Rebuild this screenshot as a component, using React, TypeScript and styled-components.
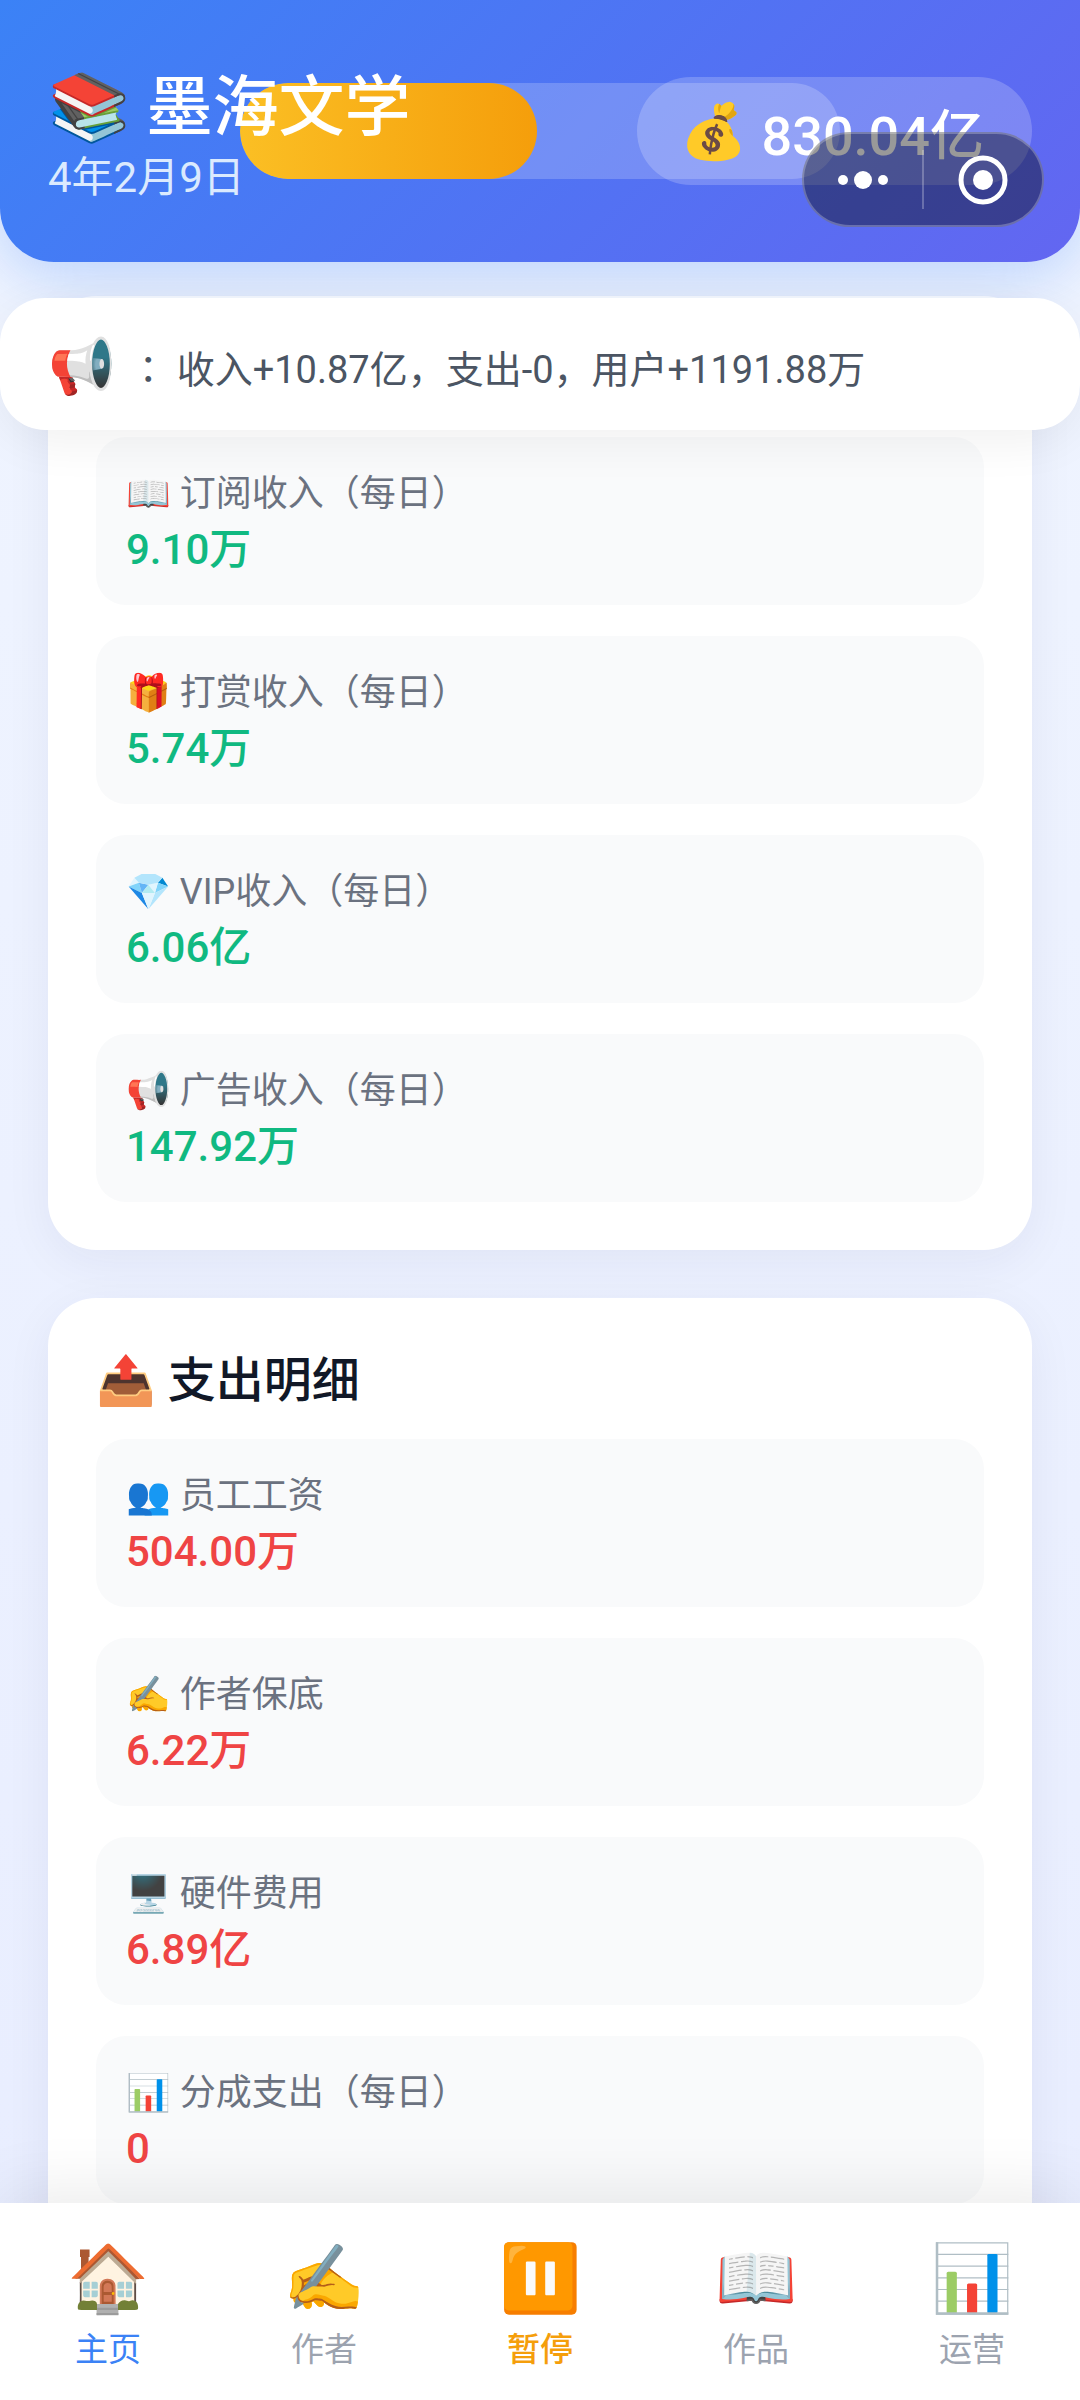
import { createGlobalStyle, styled } from 'styled-components';

const GlobalStyle = createGlobalStyle`
  * {
    box-sizing: border-box;
  }

  body {
    margin: 0;
    font-family: Roboto, 'Noto Sans CJK SC', 'Noto Color Emoji', sans-serif;
    color: #111827;
  }

  button {
    padding: 0;
    border: 0;
    background: none;
    font: inherit;
    cursor: pointer;
  }
`;

const Page = styled.div`
  position: relative;
  display: flex;
  flex-direction: column;
  height: 100vh;
  overflow: hidden;
  background: linear-gradient(180deg, #f0f5ff 0%, #e8edff 100%);
`;

const Header = styled.header`
  position: relative;
  z-index: 2;
  display: flex;
  align-items: center;
  justify-content: space-between;
  padding: 58px 48px;
  border-radius: 0 0 54px 54px;
  background: linear-gradient(135deg, #3b82f6 0%, #6366f1 100%);
  box-shadow: 0 12px 60px rgba(59, 130, 246, 0.3);
  color: #fff;
`;

const Company = styled.div`
  position: relative;
  padding-top: 6px;
`;

const CompanyName = styled.h1`
  margin: 0;
  font-size: 66px;
  font-weight: 500;
  line-height: 88px;
`;

const GameDate = styled.div`
  color: #dbeafe;
  font-size: 42px;
  line-height: 52px;
`;

// 当日进度，铺在标题和资金下面
const Track = styled.div`
  position: absolute;
  top: 83px;
  left: 50%;
  width: 600px;
  height: 96px;
  margin-left: -300px;
  border-radius: 48px;
  background: rgba(255, 255, 255, 0.2);
  overflow: hidden;
`;

const TrackFill = styled.div`
  height: 100%;
  border-radius: 48px;
  background: linear-gradient(90deg, #fbbf24, #f59e0b);
`;

const Money = styled.div`
  position: relative;
  display: flex;
  align-items: center;
  gap: 14px;
  height: 108px;
  padding: 0 48px 0 43px;
  border-radius: 54px;
  background: rgba(255, 255, 255, 0.2);
  font-size: 54px;
  font-weight: 500;
`;

const Capsule = styled.div`
  position: absolute;
  top: 132px;
  right: 36px;
  z-index: 4;
  display: flex;
  align-items: center;
  width: 242px;
  height: 95px;
  border: 2px solid rgba(255, 255, 255, 0.25);
  border-radius: 48px;
  background: rgba(0, 0, 0, 0.4);
`;

const CapsuleButton = styled.button`
  display: flex;
  flex: 1;
  align-items: center;
  justify-content: center;
  height: 100%;
`;

const CapsuleDivider = styled.span`
  width: 2px;
  height: 59px;
  background: rgba(255, 255, 255, 0.25);
`;

const Notice = styled.div`
  position: absolute;
  top: 298px;
  left: 0;
  right: 0;
  z-index: 3;
  display: flex;
  align-items: center;
  gap: 14px;
  height: 132px;
  padding: 4px 48px 0;
  border-radius: 45px;
  background: #fff;
  box-shadow: 0 12px 48px rgba(0, 0, 0, 0.06);
  color: #4b5563;
  font-size: 38px;
`;

const NoticeIcon = styled.span`
  font-size: 54px;
`;

// 冒号在字框里居中
const NoticeColon = styled.span`
  font-family: 'Noto Sans CJK JP', sans-serif;
`;

const Main = styled.main`
  display: flex;
  flex: 1;
  flex-direction: column;
  gap: 48px;
  min-height: 0;
  padding: 34px 48px 0;
  overflow: hidden;
`;

const Card = styled.section<{ $untitled: boolean }>`
  flex-shrink: 0;
  padding: ${(p) => (p.$untitled ? '141px 48px 48px' : '48px')};
  border-radius: 48px;
  background: #fff;
  box-shadow: 0 12px 48px rgba(30, 41, 80, 0.06);
`;

const CardTitle = styled.h2`
  margin: 0 0 23px;
  font-size: 48px;
  font-weight: 500;
  line-height: 70px;
`;

const ItemList = styled.div`
  display: flex;
  flex-direction: column;
  gap: 31px;
`;

const Item = styled.div`
  padding: 32px 30px 24px;
  border-radius: 30px;
  background: #f9fafb;
`;

const ItemLabel = styled.div`
  color: #6b7280;
  font-size: 36px;
  line-height: 50px;
`;

const ItemValue = styled.div<{ $tone: 'income' | 'expense' }>`
  color: ${(p) => (p.$tone === 'income' ? '#10b981' : '#ef4444')};
  font-size: 42px;
  font-weight: 500;
  line-height: 62px;
`;

const TabBar = styled.nav`
  position: relative;
  z-index: 2;
  display: flex;
  height: 197px;
  background: #fff;
  box-shadow: 0 -12px 60px rgba(0, 0, 0, 0.08);
`;

const Tab = styled.button<{ $color: string; $strong?: boolean }>`
  display: flex;
  flex: 1;
  flex-direction: column;
  align-items: center;
  padding-top: 28px;
  color: ${(p) => p.$color};
  font-size: 33px;
  font-weight: ${(p) => (p.$strong ? 500 : 400)};
  line-height: 46px;
`;

const TabIcon = styled.span`
  font-size: 66px;
  line-height: 96px;
`;

interface Entry {
  icon: string;
  label: string;
  value: string;
}

const income: Entry[] = [
  { icon: '📖', label: '订阅收入（每日）', value: '9.10万' },
  { icon: '🎁', label: '打赏收入（每日）', value: '5.74万' },
  { icon: '💎', label: 'VIP收入（每日）', value: '6.06亿' },
  { icon: '📢', label: '广告收入（每日）', value: '147.92万' },
];

const expense: Entry[] = [
  { icon: '👥', label: '员工工资', value: '504.00万' },
  { icon: '✍️', label: '作者保底', value: '6.22万' },
  { icon: '🖥️', label: '硬件费用', value: '6.89亿' },
  { icon: '📊', label: '分成支出（每日）', value: '0' },
];

const tabs = [
  { icon: '🏠', label: '主页', color: '#3b82f6' },
  { icon: '✍️', label: '作者', color: '#9ca3af' },
  { icon: '⏸️', label: '暂停', color: '#f59e0b', strong: true },
  { icon: '📖', label: '作品', color: '#9ca3af' },
  { icon: '📊', label: '运营', color: '#9ca3af' },
];

interface DetailCardProps {
  title?: string;
  entries: Entry[];
  tone: 'income' | 'expense';
}

function DetailCard({ title, entries, tone }: DetailCardProps) {
  return (
    <Card $untitled={!title}>
      {title && <CardTitle>{title}</CardTitle>}
      <ItemList>
        {entries.map((entry) => (
          <Item key={entry.label}>
            <ItemLabel>
              {entry.icon} {entry.label}
            </ItemLabel>
            <ItemValue $tone={tone}>{entry.value}</ItemValue>
          </Item>
        ))}
      </ItemList>
    </Card>
  );
}

export default function App() {
  const progress = 49.5;

  return (
    <>
      <GlobalStyle />
      <Page>
        <Header>
          <Track>
            <TrackFill style={{ width: `${progress}%` }} />
          </Track>
          <Company>
            <CompanyName>📚 墨海文学</CompanyName>
            <GameDate>4年2月9日</GameDate>
          </Company>
          <Money>
            <span>💰</span>
            <span>830.04亿</span>
          </Money>
        </Header>
        <Capsule>
          <CapsuleButton aria-label="更多">
            <svg width="50" height="20" viewBox="0 0 50 20" fill="#fff">
              <circle cx="5" cy="10" r="5" />
              <circle cx="25" cy="10" r="9" />
              <circle cx="45" cy="10" r="5" />
            </svg>
          </CapsuleButton>
          <CapsuleDivider />
          <CapsuleButton aria-label="关闭">
            <svg width="50" height="50" viewBox="0 0 50 50">
              <circle cx="25" cy="25" r="22" fill="none" stroke="#fff" strokeWidth="5" />
              <circle cx="25" cy="25" r="10" fill="#fff" />
            </svg>
          </CapsuleButton>
        </Capsule>
        <Notice>
          <NoticeIcon>📢</NoticeIcon>
          <span>
            <NoticeColon>：</NoticeColon> 收入+10.87亿，支出-0，用户+1191.88万
          </span>
        </Notice>
        <Main>
          {/* 第一张卡片的上沿被公告条盖住，不显示标题 */}
          <DetailCard entries={income} tone="income" />
          <DetailCard title="📤 支出明细" entries={expense} tone="expense" />
        </Main>
        <TabBar>
          {tabs.map((tab) => (
            <Tab key={tab.label} $color={tab.color} $strong={tab.strong}>
              <TabIcon>{tab.icon}</TabIcon>
              {tab.label}
            </Tab>
          ))}
        </TabBar>
      </Page>
    </>
  );
}
